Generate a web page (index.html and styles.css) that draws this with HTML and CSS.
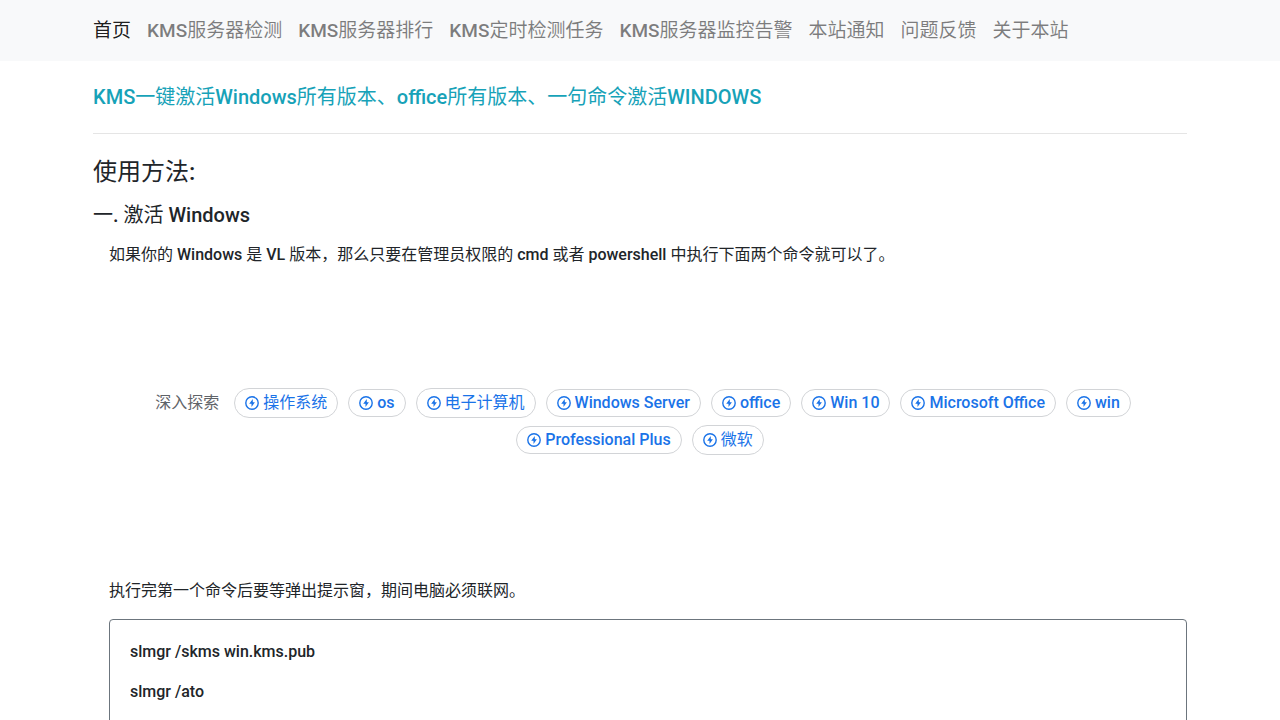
FILE: index.html
```html
<!DOCTYPE html>
<html lang="zh-CN">
<head>
    <meta charset="UTF-8">
    <meta name="viewport" content="width=device-width, initial-scale=1.0">
    <title>KMS一键激活</title>
    <link rel="stylesheet" href="styles.css">
</head>
<body>
    <svg class="sprite" aria-hidden="true">
        <symbol id="bolt" viewBox="0 0 14 14">
            <circle cx="7" cy="7" r="6.200" fill="none" stroke="currentColor" stroke-width="1.400"/>
            <path d="M7.800 3 4.200 7.700H6.500V11l3.400-4.700H7.800z" fill="currentColor"/>
        </symbol>
    </svg>
    <header class="navbar">
        <nav class="container nav">
            <a class="nav-link active" href="#">首页</a>
            <a class="nav-link" href="#"><b>KMS</b>服务器检测</a>
            <a class="nav-link" href="#"><b>KMS</b>服务器排行</a>
            <a class="nav-link" href="#"><b>KMS</b>定时检测任务</a>
            <a class="nav-link" href="#"><b>KMS</b>服务器监控告警</a>
            <a class="nav-link" href="#">本站通知</a>
            <a class="nav-link" href="#">问题反馈</a>
            <a class="nav-link" href="#">关于本站</a>
        </nav>
    </header>
    <main class="container">
        <h1 class="title"><b>KMS</b>一键激活<b>Windows</b>所有版本、<b>office</b>所有版本、一句命令激活<b>WINDOWS</b></h1>
        <hr>
        <h2>使用方法<b>:</b></h2>
        <h3>一<b>.</b> 激活 <b>Windows</b></h3>
        <div class="content">
            <p>如果你的 <b>Windows</b> 是 <b>VL</b> 版本，那么只要在管理员权限的 <b>cmd</b> 或者 <b>powershell</b> 中执行下面两个命令就可以了。</p>
        </div>
        <section class="explore">
            <span class="explore-label">深入探索</span>
            <a class="chip chip-cjk" href="#"><svg><use href="#bolt"/></svg>操作系统</a>
            <a class="chip" href="#"><svg><use href="#bolt"/></svg><b>os</b></a>
            <a class="chip chip-cjk" href="#"><svg><use href="#bolt"/></svg>电子计算机</a>
            <a class="chip" href="#"><svg><use href="#bolt"/></svg><b>Windows Server</b></a>
            <a class="chip" href="#"><svg><use href="#bolt"/></svg><b>office</b></a>
            <a class="chip" href="#"><svg><use href="#bolt"/></svg><b>Win 10</b></a>
            <a class="chip" href="#"><svg><use href="#bolt"/></svg><b>Microsoft Office</b></a>
            <a class="chip" href="#"><svg><use href="#bolt"/></svg><b>win</b></a>
            <a class="chip" href="#"><svg><use href="#bolt"/></svg><b>Professional Plus</b></a>
            <a class="chip chip-cjk" href="#"><svg><use href="#bolt"/></svg>微软</a>
        </section>
        <div class="content">
            <p>执行完第一个命令后要等弹出提示窗，期间电脑必须联网。</p>
            <div class="card">
                <p><b>slmgr /skms win.kms.pub</b></p>
                <p><b>slmgr /ato</b></p>
            </div>
        </div>
    </main>
</body>
</html>
```

FILE: styles.css
```css
* {
    box-sizing: border-box;
}
body {
    margin: 0;
    overflow-x: hidden;
    background-color: #fff;
    color: #212529;
    font-family: Roboto, "Noto Sans CJK SC", sans-serif;
    font-size: 16px;
    font-weight: 400;
    line-height: 24px;
}
body::-webkit-scrollbar {
    display: none;
}
/* latin words are set a little heavier than the chinese text */
b {
    font-weight: 500;
}
a {
    text-decoration: none;
}
h1, h2, h3 {
    margin: 0 0 16px;
    font-size: 20px;
    font-weight: 400;
    line-height: 24px;
}
h2 {
    font-size: 24px;
    line-height: 29px;
}
p {
    margin: 0 0 16px;
}
hr {
    margin: 24px 0;
    border: 0;
    border-top: 1px solid rgba(0, 0, 0, .1);
}
.sprite {
    display: none;
}
.container {
    width: 100%;
    max-width: 1140px;
    margin: 0 auto;
    padding: 0 23px;
}
.navbar {
    padding: 15px 0 14px;
    background-color: #f8f9fa;
}
.nav {
    display: flex;
    gap: 16px;
}
.nav-link {
    color: rgba(0, 0, 0, .5);
    font-size: 19px;
    line-height: 32px;
}
.nav-link.active {
    color: rgba(0, 0, 0, .9);
}
.title {
    margin-top: 24px;
    color: #17a2b8;
}
.content {
    padding-left: 16px;
}
.explore {
    display: flex;
    flex-wrap: wrap;
    align-items: center;
    justify-content: center;
    gap: 7px 10px;
    margin: 121px 0 124px;
    padding: 0 50px;
}
.explore-label {
    margin: 0 5px 0 6px;
    color: #5f6368;
}
.chip {
    display: flex;
    align-items: center;
    gap: 4px;
    height: 28px;
    padding: 0 10px;
    border: 1px solid #d2d4d7;
    border-radius: 15px;
    color: #1a73e8;
}
.chip-cjk {
    height: 30px;
}
.chip svg {
    width: 14px;
    height: 14px;
}
.card {
    padding: 20px 20px 44px;
    border: 1px solid #6c757d;
    border-radius: 4px;
}
```
